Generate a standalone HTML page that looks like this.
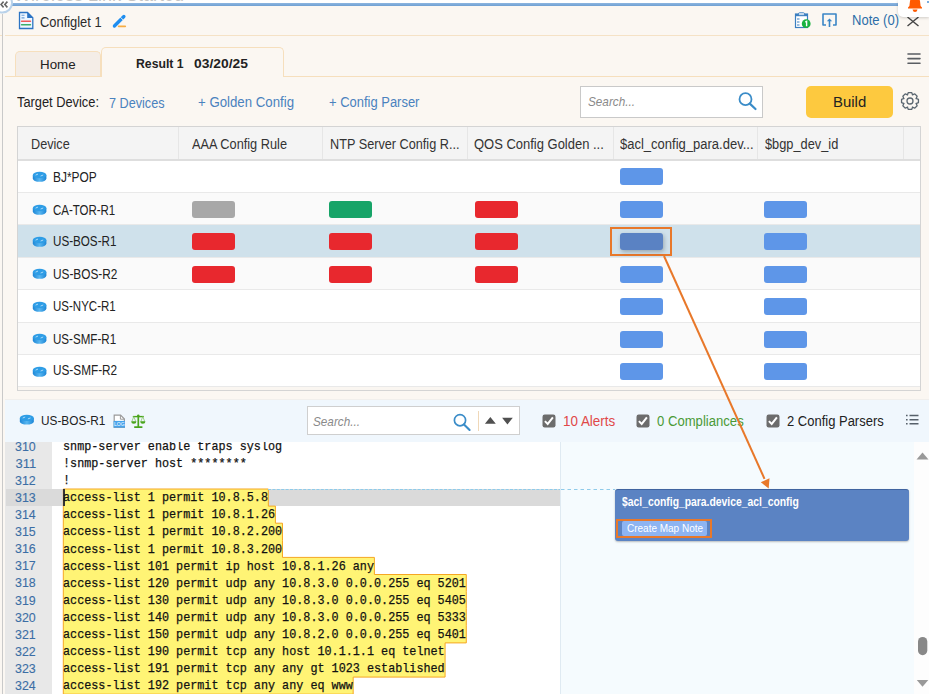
<!DOCTYPE html>
<html><head><meta charset="utf-8"><style>
html,body{margin:0;padding:0;}
body{width:929px;height:694px;overflow:hidden;position:relative;background:#fbf7f2;font-family:"Liberation Sans",sans-serif;}
.t{position:absolute;line-height:1;white-space:pre;}
.r{position:absolute;}
</style></head><body>
<div class="r" style="left:0px;top:0px;width:929px;height:3px;background:#ffffff;"></div>
<div class="t" style="left:14.00px;top:-16.33px;font-size:20px;color:#c4c4c4;transform:scaleX(0.8997);transform-origin:0.00px 0;">Wireless Link Started</div>
<div class="r" style="left:10px;top:3px;width:888px;height:3px;background:#7eaad8;background:linear-gradient(#8db6e0,#6f9fd2);"></div>
<svg class="r" style="left:0;top:0" width="20" height="20"><circle cx="2.5" cy="3" r="9.5" fill="#fff" stroke="#b9d2ea" stroke-width="2"/><path d="M3.6 1.6 L1 4.5 L3.6 7.4 M7.4 1.6 L4.8 4.5 L7.4 7.4" stroke="#666" stroke-width="1.6" fill="none"/></svg>
<div class="r" style="left:2px;top:14px;width:1px;height:680px;background:#c9c9c9;"></div>
<div class="r" style="left:0px;top:35px;width:2px;height:1px;background:#f5e2c6;"></div>
<div class="r" style="left:5px;top:35px;width:924px;height:1px;background:#f5e2c6;"></div>
<svg class="r" style="left:18px;top:11px" width="17" height="19"><path d="M1.5 1.5 H9.5 L14.8 6.8 V17.5 H1.5 Z" fill="#eef6ff" stroke="#2c74c4" stroke-width="1.3"/><path d="M9.2 1.2 L15.2 7 H9.2 Z" fill="#2c74c4"/><path d="M3.5 4.3 H6.5 M3.5 6.9 H6.5" stroke="#6a9ed6" stroke-width="1.1"/><path d="M3.5 10.3 H12.5" stroke="#ef5a5a" stroke-width="1.4" stroke-linecap="round"/><path d="M3.5 13.7 H12.5" stroke="#3cae6c" stroke-width="1.4" stroke-linecap="round"/></svg>
<div class="t" style="left:40.00px;top:14.63px;font-size:14.5px;color:#2b2b2b;transform:scaleX(0.8889);transform-origin:0.00px 0;">Configlet 1</div>
<svg class="r" style="left:110.5px;top:13px" width="17" height="17"><path d="M3.4 13 L12.9 3.5" stroke="#1f8ef0" stroke-width="3.3" stroke-linecap="round"/><path d="M9.4 4.2 L12.4 7.2" stroke="#fbf7f2" stroke-width="0.9"/><path d="M7.7 13.3 H14.2" stroke="#f6ad45" stroke-width="1.8" stroke-linecap="round"/></svg>
<svg class="r" style="left:794px;top:12px" width="18" height="17"><rect x="1.5" y="2" width="12" height="13.5" fill="#fff" stroke="#3b7fc0" stroke-width="1.2"/><rect x="1.5" y="2" width="12" height="2.2" fill="#3b7fc0"/><rect x="4.5" y="0.8" width="6" height="2.4" rx="1" fill="#fff" stroke="#3b7fc0" stroke-width="1"/><path d="M3 7 H5.5 M3 10 H5.5 M3 13 H5.5" stroke="#3b7fc0" stroke-width="1.2"/><circle cx="12.2" cy="11.7" r="4.4" fill="#19b340"/><path d="M11.3 10.2 L12.6 9.4 V14.2" stroke="#fff" stroke-width="1.4" fill="none"/></svg>
<svg class="r" style="left:821px;top:12px" width="17" height="16"><path d="M5 13 H2 V2 H15 V13 H12" stroke="#3b86c6" stroke-width="1.6" fill="none" stroke-linejoin="round"/><path d="M8.5 15 V8" stroke="#3b86c6" stroke-width="1.6"/><path d="M5.8 9.3 L8.5 6.5 L11.2 9.3 Z" fill="#3b86c6"/></svg>
<div class="t" style="left:852.00px;top:12.95px;font-size:14px;color:#2d6ea8;transform:scaleX(0.9298);transform-origin:0.00px 0;">Note (0)</div>
<svg class="r" style="left:906px;top:16px" width="14" height="11"><path d="M1.5 1 L12.5 10 M12.5 1 L1.5 10" stroke="#444" stroke-width="1.4"/></svg>
<div class="r" style="left:898px;top:0px;width:31px;height:17px;background:#ffffff;border-bottom-left-radius:5px;box-shadow:0 1px 3px rgba(0,0,0,0.18);"></div>
<svg class="r" style="left:906px;top:-2px" width="18" height="16"><path d="M4 3 Q4 1 9 1 Q14 1 14 3 L14.6 8 L16 9.5 V10.5 H2 V9.5 L3.4 8 Z" fill="#ff5a00"/><path d="M6.5 11.5 H11.5 Q11 14 9 14 Q7 14 6.5 11.5Z" fill="#ff5a00"/></svg>
<div class="r" style="left:927px;top:1px;width:2px;height:2px;background:#7aaee0;"></div>
<div class="r" style="left:15px;top:51px;width:86px;height:26px;background:#f4ede7;border:1px solid #f6dfbd;border-bottom:none;border-radius:5px 5px 0 0;box-sizing:border-box;"></div>
<div class="r" style="left:101px;top:47px;width:183px;height:30px;background:#fbf7f2;border:1px solid #f6dfbd;border-bottom:none;border-radius:5px 5px 0 0;box-sizing:border-box;"></div>
<div class="r" style="left:5px;top:76px;width:11px;height:1px;background:#f6dfbd;"></div>
<div class="r" style="left:283px;top:76px;width:646px;height:1px;background:#f6dfbd;"></div>
<div class="r" style="left:15px;top:76px;width:87px;height:1px;background:#f6dfbd;"></div>
<div class="t" style="left:40.00px;top:58.00px;font-size:13px;color:#222;transform:scaleX(1.0259);transform-origin:0.00px 0;">Home</div>
<div class="t" style="left:136.40px;top:56.57px;font-size:13.5px;color:#222;transform:scaleX(0.9067);transform-origin:0.00px 0;font-weight:bold;">Result 1</div>
<div class="t" style="left:193.90px;top:56.57px;font-size:13.5px;color:#222;transform:scaleX(1.0257);transform-origin:0.00px 0;font-weight:bold;">03/20/25</div>
<svg class="r" style="left:907px;top:52px" width="14" height="13"><path d="M1 2 H13 M1 6.6 H13 M1 11.3 H13" stroke="#5a5e63" stroke-width="1.6" stroke-linecap="round"/></svg>
<div class="t" style="left:17.40px;top:94.65px;font-size:14px;color:#222;transform:scaleX(0.9162);transform-origin:0.00px 0;">Target Device:</div>
<div class="t" style="left:108.50px;top:96.15px;font-size:14px;color:#4a82be;transform:scaleX(0.9032);transform-origin:0.00px 0;">7 Devices</div>
<div class="t" style="left:198.00px;top:94.95px;font-size:14px;color:#4a82be;transform:scaleX(0.9453);transform-origin:0.00px 0;">+ Golden Config</div>
<div class="t" style="left:329.00px;top:94.95px;font-size:14px;color:#4a82be;transform:scaleX(0.9258);transform-origin:0.00px 0;">+ Config Parser</div>
<div class="r" style="left:580px;top:86px;width:183px;height:32px;background:#ffffff;border:1px solid #c9c9c9;box-sizing:border-box;"></div>
<div class="t" style="left:588.00px;top:95.00px;font-size:13px;color:#8a8a8a;transform:scaleX(0.9038);transform-origin:0.00px 0;font-style:italic;">Search...</div>
<svg class="r" style="left:737px;top:91px" width="21" height="20"><circle cx="8.5" cy="8.2" r="6" stroke="#3a8cc8" stroke-width="1.8" fill="none"/><path d="M12.8 12.6 L18.5 18" stroke="#3a8cc8" stroke-width="2.2" stroke-linecap="round"/></svg>
<div class="r" style="left:806px;top:86px;width:87px;height:31.599999999999994px;background:#fdc93f;border-radius:5px;"></div>
<div class="t" style="left:832.80px;top:93.60px;font-size:15px;color:#222;transform:scaleX(0.9955);transform-origin:0.00px 0;">Build</div>
<svg class="r" style="left:900px;top:91px" width="20" height="20"><path d="M7.32 3.97 L8.36 1.56 L11.64 1.56 L12.68 3.97 L12.37 3.84 L14.81 2.87 L17.13 5.19 L16.16 7.63 L16.03 7.32 L18.44 8.36 L18.44 11.64 L16.03 12.68 L16.16 12.37 L17.13 14.81 L14.81 17.13 L12.37 16.16 L12.68 16.03 L11.64 18.44 L8.36 18.44 L7.32 16.03 L7.63 16.16 L5.19 17.13 L2.87 14.81 L3.84 12.37 L3.97 12.68 L1.56 11.64 L1.56 8.36 L3.97 7.32 L3.84 7.63 L2.87 5.19 L5.19 2.87 L7.63 3.84 Z" fill="none" stroke="#5a6670" stroke-width="1.3" stroke-linejoin="round"/><circle cx="10" cy="10" r="3" fill="none" stroke="#5a6670" stroke-width="1.3"/></svg>
<div class="r" style="left:17px;top:126px;width:904px;height:265px;background:#faf6f1;border:1px solid #d4d4d4;box-sizing:border-box;"></div>
<div class="r" style="left:18px;top:127px;width:902px;height:32px;background:#f4f4f4;"></div>
<div class="r" style="left:18px;top:159px;width:902px;height:2px;background:#dedede;"></div>
<div class="r" style="left:178px;top:127px;width:1px;height:32px;background:#e6e6e6;"></div>
<div class="r" style="left:322px;top:127px;width:1px;height:32px;background:#e6e6e6;"></div>
<div class="r" style="left:467px;top:127px;width:1px;height:32px;background:#e6e6e6;"></div>
<div class="r" style="left:613px;top:127px;width:1px;height:32px;background:#e6e6e6;"></div>
<div class="r" style="left:757px;top:127px;width:1px;height:32px;background:#e6e6e6;"></div>
<div class="r" style="left:903px;top:127px;width:1px;height:32px;background:#e6e6e6;"></div>
<div class="t" style="left:31.00px;top:136.75px;font-size:14px;color:#333;transform:scaleX(0.9042);transform-origin:0.00px 0;">Device</div>
<div class="t" style="left:192.40px;top:136.75px;font-size:14px;color:#333;transform:scaleX(0.9108);transform-origin:0.00px 0;">AAA Config Rule</div>
<div class="t" style="left:329.50px;top:136.75px;font-size:14px;color:#333;transform:scaleX(0.9062);transform-origin:0.00px 0;">NTP Server Config R...</div>
<div class="t" style="left:474.00px;top:136.75px;font-size:14px;color:#333;transform:scaleX(0.9268);transform-origin:0.00px 0;">QOS Config Golden ...</div>
<div class="t" style="left:619.50px;top:136.75px;font-size:14px;color:#333;transform:scaleX(0.9290);transform-origin:0.00px 0;">$acl_config_para.dev...</div>
<div class="t" style="left:764.70px;top:136.75px;font-size:14px;color:#333;transform:scaleX(0.9140);transform-origin:0.00px 0;">$bgp_dev_id</div>
<div class="r" style="left:18px;top:161px;width:902px;height:32.00px;background:#ffffff;border-bottom:1px solid #e9e9e9;box-sizing:border-box"></div>
<svg class="r" style="left:31.7px;top:170.90px" width="16" height="12" viewBox="0 0 16.00 11.4" preserveAspectRatio="none"><defs><linearGradient id="rg" x1="0" x2="1" y1="0" y2="0"><stop offset="0" stop-color="#1d86d6"/><stop offset="0.5" stop-color="#58b6f0"/><stop offset="1" stop-color="#1d86d6"/></linearGradient></defs><path d="M0.8 3.8 V7.2 A6.8 3.1 0 0 0 14.4 7.2 V3.8 Z" fill="url(#rg)"/><ellipse cx="7.6" cy="3.8" rx="6.8" ry="3.1" fill="#2e9de6"/><path d="M3.6 3.9 L6 2.9 M8.6 4.8 L11.2 3.8" stroke="#d8efff" stroke-width="0.7"/></svg>
<div class="t" style="left:52.80px;top:170.45px;font-size:14px;color:#222;transform:scaleX(0.8510);transform-origin:0.00px 0;">BJ*POP</div>
<div class="r" style="left:619.8px;top:168.20px;width:43px;height:17px;background:#5e96e8;border-radius:3px"></div>
<div class="r" style="left:18px;top:193.0px;width:902px;height:32.40px;background:#fafafa;border-bottom:1px solid #e9e9e9;box-sizing:border-box"></div>
<svg class="r" style="left:31.7px;top:203.60px" width="16" height="12" viewBox="0 0 16.00 11.4" preserveAspectRatio="none"><defs><linearGradient id="rg" x1="0" x2="1" y1="0" y2="0"><stop offset="0" stop-color="#1d86d6"/><stop offset="0.5" stop-color="#58b6f0"/><stop offset="1" stop-color="#1d86d6"/></linearGradient></defs><path d="M0.8 3.8 V7.2 A6.8 3.1 0 0 0 14.4 7.2 V3.8 Z" fill="url(#rg)"/><ellipse cx="7.6" cy="3.8" rx="6.8" ry="3.1" fill="#2e9de6"/><path d="M3.6 3.9 L6 2.9 M8.6 4.8 L11.2 3.8" stroke="#d8efff" stroke-width="0.7"/></svg>
<div class="t" style="left:52.80px;top:203.25px;font-size:14px;color:#222;transform:scaleX(0.8190);transform-origin:0.00px 0;">CA-TOR-R1</div>
<div class="r" style="left:192px;top:200.90px;width:43px;height:17px;background:#a8a8a8;border-radius:3px"></div>
<div class="r" style="left:329.3px;top:200.90px;width:43px;height:17px;background:#17a468;border-radius:3px"></div>
<div class="r" style="left:475px;top:200.90px;width:43px;height:17px;background:#e8282e;border-radius:3px"></div>
<div class="r" style="left:619.8px;top:200.90px;width:43px;height:17px;background:#5e96e8;border-radius:3px"></div>
<div class="r" style="left:763.7px;top:200.90px;width:43px;height:17px;background:#5e96e8;border-radius:3px"></div>
<div class="r" style="left:18px;top:225.4px;width:902px;height:32.40px;background:#cfe1eb;border-bottom:1px solid #e9e9e9;box-sizing:border-box"></div>
<svg class="r" style="left:31.7px;top:236.00px" width="16" height="12" viewBox="0 0 16.00 11.4" preserveAspectRatio="none"><defs><linearGradient id="rg" x1="0" x2="1" y1="0" y2="0"><stop offset="0" stop-color="#1d86d6"/><stop offset="0.5" stop-color="#58b6f0"/><stop offset="1" stop-color="#1d86d6"/></linearGradient></defs><path d="M0.8 3.8 V7.2 A6.8 3.1 0 0 0 14.4 7.2 V3.8 Z" fill="url(#rg)"/><ellipse cx="7.6" cy="3.8" rx="6.8" ry="3.1" fill="#2e9de6"/><path d="M3.6 3.9 L6 2.9 M8.6 4.8 L11.2 3.8" stroke="#d8efff" stroke-width="0.7"/></svg>
<div class="t" style="left:52.80px;top:234.35px;font-size:14px;color:#222;transform:scaleX(0.8315);transform-origin:0.00px 0;">US-BOS-R1</div>
<div class="r" style="left:192px;top:233.30px;width:43px;height:17px;background:#e8282e;border-radius:3px"></div>
<div class="r" style="left:329.3px;top:233.30px;width:43px;height:17px;background:#e8282e;border-radius:3px"></div>
<div class="r" style="left:475px;top:233.30px;width:43px;height:17px;background:#e8282e;border-radius:3px"></div>
<div class="r" style="left:610px;top:226.9px;width:62px;height:29px;border:2px solid #e8782a;box-sizing:border-box"></div>
<div class="r" style="left:619.9px;top:233.30px;width:43px;height:17px;background:#5a82c3;border-radius:3px;box-shadow:1px 2px 4px rgba(0,0,0,0.25)"></div>
<div class="r" style="left:763.7px;top:233.30px;width:43px;height:17px;background:#5e96e8;border-radius:3px"></div>
<div class="r" style="left:18px;top:257.8px;width:902px;height:32.40px;background:#fafafa;border-bottom:1px solid #e9e9e9;box-sizing:border-box"></div>
<svg class="r" style="left:31.7px;top:268.40px" width="16" height="12" viewBox="0 0 16.00 11.4" preserveAspectRatio="none"><defs><linearGradient id="rg" x1="0" x2="1" y1="0" y2="0"><stop offset="0" stop-color="#1d86d6"/><stop offset="0.5" stop-color="#58b6f0"/><stop offset="1" stop-color="#1d86d6"/></linearGradient></defs><path d="M0.8 3.8 V7.2 A6.8 3.1 0 0 0 14.4 7.2 V3.8 Z" fill="url(#rg)"/><ellipse cx="7.6" cy="3.8" rx="6.8" ry="3.1" fill="#2e9de6"/><path d="M3.6 3.9 L6 2.9 M8.6 4.8 L11.2 3.8" stroke="#d8efff" stroke-width="0.7"/></svg>
<div class="t" style="left:52.80px;top:266.85px;font-size:14px;color:#222;transform:scaleX(0.8446);transform-origin:0.00px 0;">US-BOS-R2</div>
<div class="r" style="left:192px;top:265.70px;width:43px;height:17px;background:#e8282e;border-radius:3px"></div>
<div class="r" style="left:329.3px;top:265.70px;width:43px;height:17px;background:#e8282e;border-radius:3px"></div>
<div class="r" style="left:475px;top:265.70px;width:43px;height:17px;background:#e8282e;border-radius:3px"></div>
<div class="r" style="left:619.8px;top:265.70px;width:43px;height:17px;background:#5e96e8;border-radius:3px"></div>
<div class="r" style="left:763.7px;top:265.70px;width:43px;height:17px;background:#5e96e8;border-radius:3px"></div>
<div class="r" style="left:18px;top:290.2px;width:902px;height:32.40px;background:#ffffff;border-bottom:1px solid #e9e9e9;box-sizing:border-box"></div>
<svg class="r" style="left:31.7px;top:300.80px" width="16" height="12" viewBox="0 0 16.00 11.4" preserveAspectRatio="none"><defs><linearGradient id="rg" x1="0" x2="1" y1="0" y2="0"><stop offset="0" stop-color="#1d86d6"/><stop offset="0.5" stop-color="#58b6f0"/><stop offset="1" stop-color="#1d86d6"/></linearGradient></defs><path d="M0.8 3.8 V7.2 A6.8 3.1 0 0 0 14.4 7.2 V3.8 Z" fill="url(#rg)"/><ellipse cx="7.6" cy="3.8" rx="6.8" ry="3.1" fill="#2e9de6"/><path d="M3.6 3.9 L6 2.9 M8.6 4.8 L11.2 3.8" stroke="#d8efff" stroke-width="0.7"/></svg>
<div class="t" style="left:52.80px;top:299.05px;font-size:14px;color:#222;transform:scaleX(0.8223);transform-origin:0.00px 0;">US-NYC-R1</div>
<div class="r" style="left:619.8px;top:298.10px;width:43px;height:17px;background:#5e96e8;border-radius:3px"></div>
<div class="r" style="left:763.7px;top:298.10px;width:43px;height:17px;background:#5e96e8;border-radius:3px"></div>
<div class="r" style="left:18px;top:322.6px;width:902px;height:32.40px;background:#fafafa;border-bottom:1px solid #e9e9e9;box-sizing:border-box"></div>
<svg class="r" style="left:31.7px;top:333.20px" width="16" height="12" viewBox="0 0 16.00 11.4" preserveAspectRatio="none"><defs><linearGradient id="rg" x1="0" x2="1" y1="0" y2="0"><stop offset="0" stop-color="#1d86d6"/><stop offset="0.5" stop-color="#58b6f0"/><stop offset="1" stop-color="#1d86d6"/></linearGradient></defs><path d="M0.8 3.8 V7.2 A6.8 3.1 0 0 0 14.4 7.2 V3.8 Z" fill="url(#rg)"/><ellipse cx="7.6" cy="3.8" rx="6.8" ry="3.1" fill="#2e9de6"/><path d="M3.6 3.9 L6 2.9 M8.6 4.8 L11.2 3.8" stroke="#d8efff" stroke-width="0.7"/></svg>
<div class="t" style="left:52.80px;top:331.75px;font-size:14px;color:#222;transform:scaleX(0.8281);transform-origin:0.00px 0;">US-SMF-R1</div>
<div class="r" style="left:619.8px;top:330.50px;width:43px;height:17px;background:#5e96e8;border-radius:3px"></div>
<div class="r" style="left:763.7px;top:330.50px;width:43px;height:17px;background:#5e96e8;border-radius:3px"></div>
<div class="r" style="left:18px;top:355.0px;width:902px;height:32.40px;background:#ffffff;border-bottom:1px solid #e9e9e9;box-sizing:border-box"></div>
<svg class="r" style="left:31.7px;top:365.60px" width="16" height="12" viewBox="0 0 16.00 11.4" preserveAspectRatio="none"><defs><linearGradient id="rg" x1="0" x2="1" y1="0" y2="0"><stop offset="0" stop-color="#1d86d6"/><stop offset="0.5" stop-color="#58b6f0"/><stop offset="1" stop-color="#1d86d6"/></linearGradient></defs><path d="M0.8 3.8 V7.2 A6.8 3.1 0 0 0 14.4 7.2 V3.8 Z" fill="url(#rg)"/><ellipse cx="7.6" cy="3.8" rx="6.8" ry="3.1" fill="#2e9de6"/><path d="M3.6 3.9 L6 2.9 M8.6 4.8 L11.2 3.8" stroke="#d8efff" stroke-width="0.7"/></svg>
<div class="t" style="left:52.80px;top:363.45px;font-size:14px;color:#222;transform:scaleX(0.8412);transform-origin:0.00px 0;">US-SMF-R2</div>
<div class="r" style="left:619.8px;top:362.90px;width:43px;height:17px;background:#5e96e8;border-radius:3px"></div>
<div class="r" style="left:763.7px;top:362.90px;width:43px;height:17px;background:#5e96e8;border-radius:3px"></div>
<div class="r" style="left:5px;top:399px;width:924px;height:1px;background:#f1efec;"></div>
<div class="r" style="left:5px;top:400px;width:924px;height:42px;background:#f0f7fd;"></div>
<svg class="r" style="left:18.5px;top:414px" width="16" height="12" viewBox="0 0 15.53 11.65"><defs><linearGradient id="rg" x1="0" x2="1" y1="0" y2="0"><stop offset="0" stop-color="#1d86d6"/><stop offset="0.5" stop-color="#58b6f0"/><stop offset="1" stop-color="#1d86d6"/></linearGradient></defs><path d="M0.8 3.8 V7.2 A6.8 3.1 0 0 0 14.4 7.2 V3.8 Z" fill="url(#rg)"/><ellipse cx="7.6" cy="3.8" rx="6.8" ry="3.1" fill="#2e9de6"/><path d="M3.6 3.9 L6 2.9 M8.6 4.8 L11.2 3.8" stroke="#d8efff" stroke-width="0.7"/></svg>
<div class="t" style="left:40.70px;top:414.47px;font-size:13.5px;color:#222;transform:scaleX(0.8748);transform-origin:0.00px 0;">US-BOS-R1</div>
<svg class="r" style="left:113px;top:414px" width="13" height="15"><path d="M1.2 1.2 H7.6 L11.4 5 V13.4 H1.2 Z" fill="#fff" stroke="#9a9a9a" stroke-width="1.2"/><path d="M7.4 1.2 V5.2 H11.4" fill="none" stroke="#9a9a9a" stroke-width="1"/><rect x="0.6" y="6.9" width="11.4" height="6.7" fill="#45a3ec"/><text x="6.3" y="12.4" font-size="5" fill="#fff" text-anchor="middle" font-family="Liberation Sans">LOG</text></svg>
<svg class="r" style="left:131px;top:414px" width="15" height="15"><path d="M7.3 1.2 V13 M3.2 13.2 H11.4" stroke="#4aa51c" stroke-width="1.7"/><path d="M1.8 2.6 H12.8" stroke="#4aa51c" stroke-width="1.4"/><circle cx="7.3" cy="1.8" r="1.2" fill="#4aa51c"/><path d="M2.8 2.6 L0.9 7.4 M2.8 2.6 L4.7 7.4 M11.8 2.6 L9.9 7.4 M11.8 2.6 L13.7 7.4" stroke="#8cc870" stroke-width="0.8"/><path d="M0.3 7.3 A2.5 2.5 0 0 0 5.3 7.3 Z M9.3 7.3 A2.5 2.5 0 0 0 14.3 7.3 Z" fill="#4aa51c"/></svg>
<div class="r" style="left:307px;top:406px;width:213px;height:29px;background:#ffffff;border:1px solid #cfcfcf;box-sizing:border-box;"></div>
<div class="t" style="left:313.20px;top:415.00px;font-size:13px;color:#8a8a8a;transform:scaleX(0.9038);transform-origin:0.00px 0;font-style:italic;">Search...</div>
<svg class="r" style="left:452px;top:412px" width="21" height="20"><circle cx="8" cy="8.2" r="5.6" stroke="#3a8cc8" stroke-width="1.7" fill="none"/><path d="M12 12.4 L17.6 18" stroke="#3a8cc8" stroke-width="2.1" stroke-linecap="round"/></svg>
<div class="r" style="left:478px;top:411px;width:1px;height:20px;background:#f0d8b8;"></div>
<svg class="r" style="left:484px;top:415px" width="32" height="11"><path d="M0.9 8.7 L6.35 2 L11.8 8.7 Z M18.1 2.7 L28.8 2.7 L23.45 9.5 Z" fill="#505050"/></svg>
<svg class="r" style="left:541.5px;top:413.5px" width="14" height="14"><rect x="0.5" y="0.5" width="13" height="13" rx="2.2" fill="#6c6c6c"/><path d="M2.9 7.1 L5.7 9.9 L10.9 3.4" stroke="#fff" stroke-width="2" fill="none"/></svg>
<div class="t" style="left:562.70px;top:413.95px;font-size:14px;color:#e04848;transform:scaleX(0.9578);transform-origin:0.00px 0;">10 Alerts</div>
<svg class="r" style="left:636.3px;top:413.5px" width="14" height="14"><rect x="0.5" y="0.5" width="13" height="13" rx="2.2" fill="#6c6c6c"/><path d="M2.9 7.1 L5.7 9.9 L10.9 3.4" stroke="#fff" stroke-width="2" fill="none"/></svg>
<div class="t" style="left:657.40px;top:413.95px;font-size:14px;color:#4a9a36;transform:scaleX(0.9363);transform-origin:0.00px 0;">0 Compliances</div>
<svg class="r" style="left:765.5px;top:413.5px" width="14" height="14"><rect x="0.5" y="0.5" width="13" height="13" rx="2.2" fill="#6c6c6c"/><path d="M2.9 7.1 L5.7 9.9 L10.9 3.4" stroke="#fff" stroke-width="2" fill="none"/></svg>
<div class="t" style="left:786.60px;top:413.95px;font-size:14px;color:#222;transform:scaleX(0.9276);transform-origin:0.00px 0;">2 Config Parsers</div>
<svg class="r" style="left:905px;top:414px" width="15" height="13"><path d="M1 1.5 H2.6 M1 5.7 H2.6 M1 9.8 H2.6 M4.5 1.5 H13.5 M4.5 5.7 H13.5 M4.5 9.8 H13.5" stroke="#56606a" stroke-width="1.6"/></svg>
<div class="r" style="left:5px;top:442px;width:47px;height:252px;background:#e8e8e8;"></div>
<div class="r" style="left:52px;top:442px;width:508px;height:252px;background:#ffffff;"></div>
<div class="r" style="left:560px;top:442px;width:354px;height:252px;background:#f5fbfe;"></div>
<div class="r" style="left:559.6px;top:442px;width:1.3999999999999773px;height:252px;background:#dfeaf2;"></div>
<div class="r" style="left:914px;top:442px;width:15px;height:252px;background:#fdfdfd;"></div>
<div class="r" style="left:6px;top:489px;width:554px;height:16.600000000000023px;background:#dadada;"></div>
<svg class="r" style="left:0;top:0" width="929" height="694"><path d="M63.3 489.0 H268.33 V506.10 H275.40 V523.20 H282.47 V540.30 H282.47 V557.40 H374.38 V574.50 H466.29 V591.60 H466.29 V608.70 H466.29 V625.80 H466.29 V642.90 H445.08 V660.00 H445.08 V677.10 H353.17 V694.20 H63.3 Z" fill="#fff475" stroke="#f5a623" stroke-width="1"/></svg>
<svg class="r" style="left:0;top:0" width="929" height="694"><path d="M268 489.5 H560" stroke="#8fcbea" stroke-width="1" stroke-dasharray="3 1.4"/><path d="M561 489.5 H615" stroke="#8fcbea" stroke-width="1" stroke-dasharray="3.5 3"/></svg>
<div class="r" style="left:62.5px;top:489px;width:2.0px;height:17px;background:#333;"></div>
<div class="r" style="left:0;top:442px;width:929px;height:252px;overflow:hidden">
<div class="t" style="left:14.50px;top:439.60px;font-size:13px;color:#3b6ea5;transform:scaleX(0.9539);transform-origin:0.00px 0;top:-2.40px;-webkit-text-stroke:0.1px #3b6ea5;">310</div>
<div class="t" style="left:63.3px;top:-1.10px;font-family:'Liberation Mono',monospace;font-size:12.8px;color:#111;-webkit-text-stroke:0.25px #111;transform:scaleX(0.9204);transform-origin:0 0">snmp-server enable traps syslog</div>
<div class="t" style="left:15.50px;top:456.70px;font-size:13px;color:#3b6ea5;top:14.70px;-webkit-text-stroke:0.1px #3b6ea5;">311</div>
<div class="t" style="left:63.3px;top:16.00px;font-family:'Liberation Mono',monospace;font-size:12.8px;color:#111;-webkit-text-stroke:0.25px #111;transform:scaleX(0.9204);transform-origin:0 0">!snmp-server host ********</div>
<div class="t" style="left:14.50px;top:473.80px;font-size:13px;color:#3b6ea5;transform:scaleX(0.9539);transform-origin:0.00px 0;top:31.80px;-webkit-text-stroke:0.1px #3b6ea5;">312</div>
<div class="t" style="left:63.3px;top:33.10px;font-family:'Liberation Mono',monospace;font-size:12.8px;color:#111;-webkit-text-stroke:0.25px #111;transform:scaleX(0.9204);transform-origin:0 0">!</div>
<div class="t" style="left:14.50px;top:490.90px;font-size:13px;color:#3b6ea5;transform:scaleX(0.9539);transform-origin:0.00px 0;top:48.90px;-webkit-text-stroke:0.1px #3b6ea5;">313</div>
<div class="t" style="left:63.3px;top:50.20px;font-family:'Liberation Mono',monospace;font-size:12.8px;color:#111;-webkit-text-stroke:0.25px #111;transform:scaleX(0.9204);transform-origin:0 0">access-list 1 permit 10.8.5.8</div>
<div class="t" style="left:14.50px;top:508.00px;font-size:13px;color:#3b6ea5;transform:scaleX(0.9539);transform-origin:0.00px 0;top:66.00px;-webkit-text-stroke:0.1px #3b6ea5;">314</div>
<div class="t" style="left:63.3px;top:67.30px;font-family:'Liberation Mono',monospace;font-size:12.8px;color:#111;-webkit-text-stroke:0.25px #111;transform:scaleX(0.9204);transform-origin:0 0">access-list 1 permit 10.8.1.26</div>
<div class="t" style="left:14.50px;top:525.10px;font-size:13px;color:#3b6ea5;transform:scaleX(0.9539);transform-origin:0.00px 0;top:83.10px;-webkit-text-stroke:0.1px #3b6ea5;">315</div>
<div class="t" style="left:63.3px;top:84.40px;font-family:'Liberation Mono',monospace;font-size:12.8px;color:#111;-webkit-text-stroke:0.25px #111;transform:scaleX(0.9204);transform-origin:0 0">access-list 1 permit 10.8.2.200</div>
<div class="t" style="left:14.50px;top:542.20px;font-size:13px;color:#3b6ea5;transform:scaleX(0.9539);transform-origin:0.00px 0;top:100.20px;-webkit-text-stroke:0.1px #3b6ea5;">316</div>
<div class="t" style="left:63.3px;top:101.50px;font-family:'Liberation Mono',monospace;font-size:12.8px;color:#111;-webkit-text-stroke:0.25px #111;transform:scaleX(0.9204);transform-origin:0 0">access-list 1 permit 10.8.3.200</div>
<div class="t" style="left:14.50px;top:559.30px;font-size:13px;color:#3b6ea5;transform:scaleX(0.9539);transform-origin:0.00px 0;top:117.30px;-webkit-text-stroke:0.1px #3b6ea5;">317</div>
<div class="t" style="left:63.3px;top:118.60px;font-family:'Liberation Mono',monospace;font-size:12.8px;color:#111;-webkit-text-stroke:0.25px #111;transform:scaleX(0.9204);transform-origin:0 0">access-list 101 permit ip host 10.8.1.26 any</div>
<div class="t" style="left:14.50px;top:576.40px;font-size:13px;color:#3b6ea5;transform:scaleX(0.9539);transform-origin:0.00px 0;top:134.40px;-webkit-text-stroke:0.1px #3b6ea5;">318</div>
<div class="t" style="left:63.3px;top:135.70px;font-family:'Liberation Mono',monospace;font-size:12.8px;color:#111;-webkit-text-stroke:0.25px #111;transform:scaleX(0.9204);transform-origin:0 0">access-list 120 permit udp any 10.8.3.0 0.0.0.255 eq 5201</div>
<div class="t" style="left:14.50px;top:593.50px;font-size:13px;color:#3b6ea5;transform:scaleX(0.9539);transform-origin:0.00px 0;top:151.50px;-webkit-text-stroke:0.1px #3b6ea5;">319</div>
<div class="t" style="left:63.3px;top:152.80px;font-family:'Liberation Mono',monospace;font-size:12.8px;color:#111;-webkit-text-stroke:0.25px #111;transform:scaleX(0.9204);transform-origin:0 0">access-list 130 permit udp any 10.8.3.0 0.0.0.255 eq 5405</div>
<div class="t" style="left:14.50px;top:610.60px;font-size:13px;color:#3b6ea5;transform:scaleX(0.9539);transform-origin:0.00px 0;top:168.60px;-webkit-text-stroke:0.1px #3b6ea5;">320</div>
<div class="t" style="left:63.3px;top:169.90px;font-family:'Liberation Mono',monospace;font-size:12.8px;color:#111;-webkit-text-stroke:0.25px #111;transform:scaleX(0.9204);transform-origin:0 0">access-list 140 permit udp any 10.8.3.0 0.0.0.255 eq 5333</div>
<div class="t" style="left:14.50px;top:627.70px;font-size:13px;color:#3b6ea5;transform:scaleX(0.9539);transform-origin:0.00px 0;top:185.70px;-webkit-text-stroke:0.1px #3b6ea5;">321</div>
<div class="t" style="left:63.3px;top:187.00px;font-family:'Liberation Mono',monospace;font-size:12.8px;color:#111;-webkit-text-stroke:0.25px #111;transform:scaleX(0.9204);transform-origin:0 0">access-list 150 permit udp any 10.8.2.0 0.0.0.255 eq 5401</div>
<div class="t" style="left:14.50px;top:644.80px;font-size:13px;color:#3b6ea5;transform:scaleX(0.9539);transform-origin:0.00px 0;top:202.80px;-webkit-text-stroke:0.1px #3b6ea5;">322</div>
<div class="t" style="left:63.3px;top:204.10px;font-family:'Liberation Mono',monospace;font-size:12.8px;color:#111;-webkit-text-stroke:0.25px #111;transform:scaleX(0.9204);transform-origin:0 0">access-list 190 permit tcp any host 10.1.1.1 eq telnet</div>
<div class="t" style="left:14.50px;top:661.90px;font-size:13px;color:#3b6ea5;transform:scaleX(0.9539);transform-origin:0.00px 0;top:219.90px;-webkit-text-stroke:0.1px #3b6ea5;">323</div>
<div class="t" style="left:63.3px;top:221.20px;font-family:'Liberation Mono',monospace;font-size:12.8px;color:#111;-webkit-text-stroke:0.25px #111;transform:scaleX(0.9204);transform-origin:0 0">access-list 191 permit tcp any any gt 1023 established</div>
<div class="t" style="left:14.50px;top:679.00px;font-size:13px;color:#3b6ea5;transform:scaleX(0.9539);transform-origin:0.00px 0;top:237.00px;-webkit-text-stroke:0.1px #3b6ea5;">324</div>
<div class="t" style="left:63.3px;top:238.30px;font-family:'Liberation Mono',monospace;font-size:12.8px;color:#111;-webkit-text-stroke:0.25px #111;transform:scaleX(0.9204);transform-origin:0 0">access-list 192 permit tcp any any eq www</div>
</div>
<svg class="r" style="left:914px;top:449px" width="15" height="240"><path d="M2.5 10.5 L8.5 3.5 L14.5 10.5 Z" fill="#999"/><rect x="4" y="188" width="9.3" height="18.2" rx="4.6" fill="#888"/><path d="M2.8 231 L8.5 237.8 L14.3 231 Z" fill="#999"/></svg>
<div class="r" style="left:615.4px;top:489px;width:293.9px;height:52.39999999999998px;background:#5b83c3;border-radius:3px;border-top:1px solid #3f63a0;box-sizing:border-box;box-shadow:0 1px 2px rgba(0,0,0,0.25);"></div>
<div class="t" style="left:622.30px;top:495.84px;font-size:12px;color:#ffffff;transform:scaleX(0.8630);transform-origin:0.00px 0;font-weight:bold;">$acl_config_para.device_acl_config</div>
<div class="r" style="left:622.3px;top:521.2px;width:85.0px;height:15.0px;background:#8db4f2;border-radius:2px;"></div>
<div class="t" style="left:626.80px;top:522.69px;font-size:11px;color:#ffffff;transform:scaleX(0.9075);transform-origin:0.00px 0;">Create Map Note</div>
<div class="r" style="left:615.8px;top:519px;width:95.80000000000007px;height:19.399999999999977px;border:2px solid #e8782a;box-sizing:border-box;"></div>
<svg class="r" style="left:0;top:0" width="929" height="694"><path d="M664 256 L764.5 478.8" stroke="#e8782a" stroke-width="2"/><path d="M768.7 488.4 L760.8 482.3 L769.5 478.3 Z" fill="#e8782a"/></svg>
</body></html>
